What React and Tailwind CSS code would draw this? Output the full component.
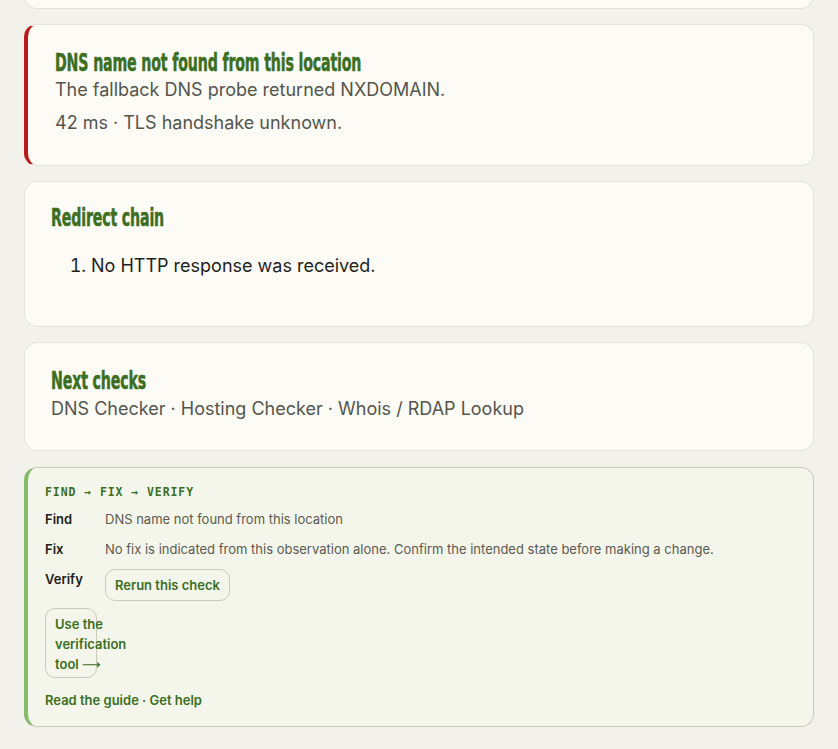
import { useState } from "react";

const body = "font-['Inter','Noto_Sans',sans-serif]";

function Title({ children }) {
  return (
    <h2 className="h-[28px] whitespace-nowrap">
      <span className="inline-block origin-left scale-x-[0.63] font-['DejaVu_Sans_Condensed','DejaVu_Sans',sans-serif] text-[25px] font-bold leading-[28px] tracking-[-0.01em] text-[#3b6e22] [-webkit-text-stroke:0.5px_#3b6e22]">
        {children}
      </span>
    </h2>
  );
}

function Card({ accent, children, className = "" }) {
  return (
    <section
      className={`rounded-[13px] border border-[#e6e3d9] bg-[#fcfbf6] ${accent ? "border-l-4 border-l-[#b71c1c]" : ""} ${className}`}
    >
      {children}
    </section>
  );
}

export default function App() {
  const [runs, setRuns] = useState(0);

  return (
    <div className={`min-h-[749px] bg-[#f3f1eb] px-6 ${body}`}>
      <div className="flex flex-col gap-[15px]">
        {/* tail of the card above */}
        <div className="-mt-4 h-[25px] rounded-b-[13px] border border-t-0 border-[#e6e3d9] bg-[#fcfbf6]" />

        {/* Result */}
        <Card accent className="pt-[24px] pb-[29px] pl-[27px] pr-6">
          <Title>DNS name not found from this location</Title>
          <p className="text-[18px] leading-[26px] text-[#55554c]">
            The fallback DNS probe returned NXDOMAIN.
          </p>
          <p className="mt-[7px] text-[18px] leading-[26px] text-[#55554c]">
            42 ms · TLS handshake unknown.
          </p>
        </Card>

        {/* Redirect chain */}
        <Card className="pt-[22px] pb-[47px] px-[26px]">
          <Title>Redirect chain</Title>
          <ol className="mt-[21px] list-decimal pl-[40px] text-[18px] leading-[26px] text-[#1f1f1a]">
            <li>No HTTP response was received.</li>
          </ol>
        </Card>

        {/* Next checks */}
        <Card className="pt-[24px] pb-[28px] px-[26px]">
          <Title>Next checks</Title>
          <p className="mt-[1px] text-[18px] leading-[26px] text-[#55554c]">
            DNS Checker · Hosting Checker · Whois / RDAP Lookup
          </p>
        </Card>

        {/* Find -> Fix -> Verify */}
        <section className="mt-[1px] rounded-[13px] border border-[#c9cbb8] border-l-4 border-l-[#84ba6a] bg-[#f5f6eb] pt-[15px] pb-[16px] pl-[17px] pr-4">
          <div className="font-['DejaVu_Sans_Mono','Liberation_Mono',monospace] text-[11.5px] font-bold leading-[18px] tracking-[0.08em] text-[#3b6e22]">
            FIND → FIX → VERIFY
          </div>
          <dl className="mt-[8px] grid grid-cols-[60px_1fr] gap-y-[10px] text-[13px] leading-[20px]">
            <dt className="font-semibold text-[#1c1c17]">Find</dt>
            <dd className="text-[#5a5a50]">DNS name not found from this location</dd>
            <dt className="font-semibold text-[#1c1c17]">Fix</dt>
            <dd className="text-[#5a5a50]">
              No fix is indicated from this observation alone. Confirm the intended state before making a change.
            </dd>
            <dt className="font-semibold text-[#1c1c17]">Verify</dt>
            <dd>
              <button
                onClick={() => setRuns(runs + 1)}
                className="rounded-[10px] border border-[#c9cbb8] px-[9px] py-[5px] text-[13px] font-semibold leading-[20px] text-[#3b6e22]"
              >
                Rerun this check
              </button>
            </dd>
          </dl>
          <a className="mt-[7px] block h-[70px] w-[52px] whitespace-nowrap rounded-[10px] border border-[#c9cbb8] px-[9px] py-[5px] text-[13px] font-semibold leading-[20px] text-[#3b6e22]">
            Use the
            <br />
            verification
            <br />
            tool <span className="font-['DejaVu_Sans',sans-serif] font-normal">⟶</span>
          </a>
          <div className="mt-[12px] text-[13px] font-semibold leading-[20px] text-[#3b6e22]">
            Read the guide · Get help
          </div>
        </section>
      </div>
    </div>
  );
}
